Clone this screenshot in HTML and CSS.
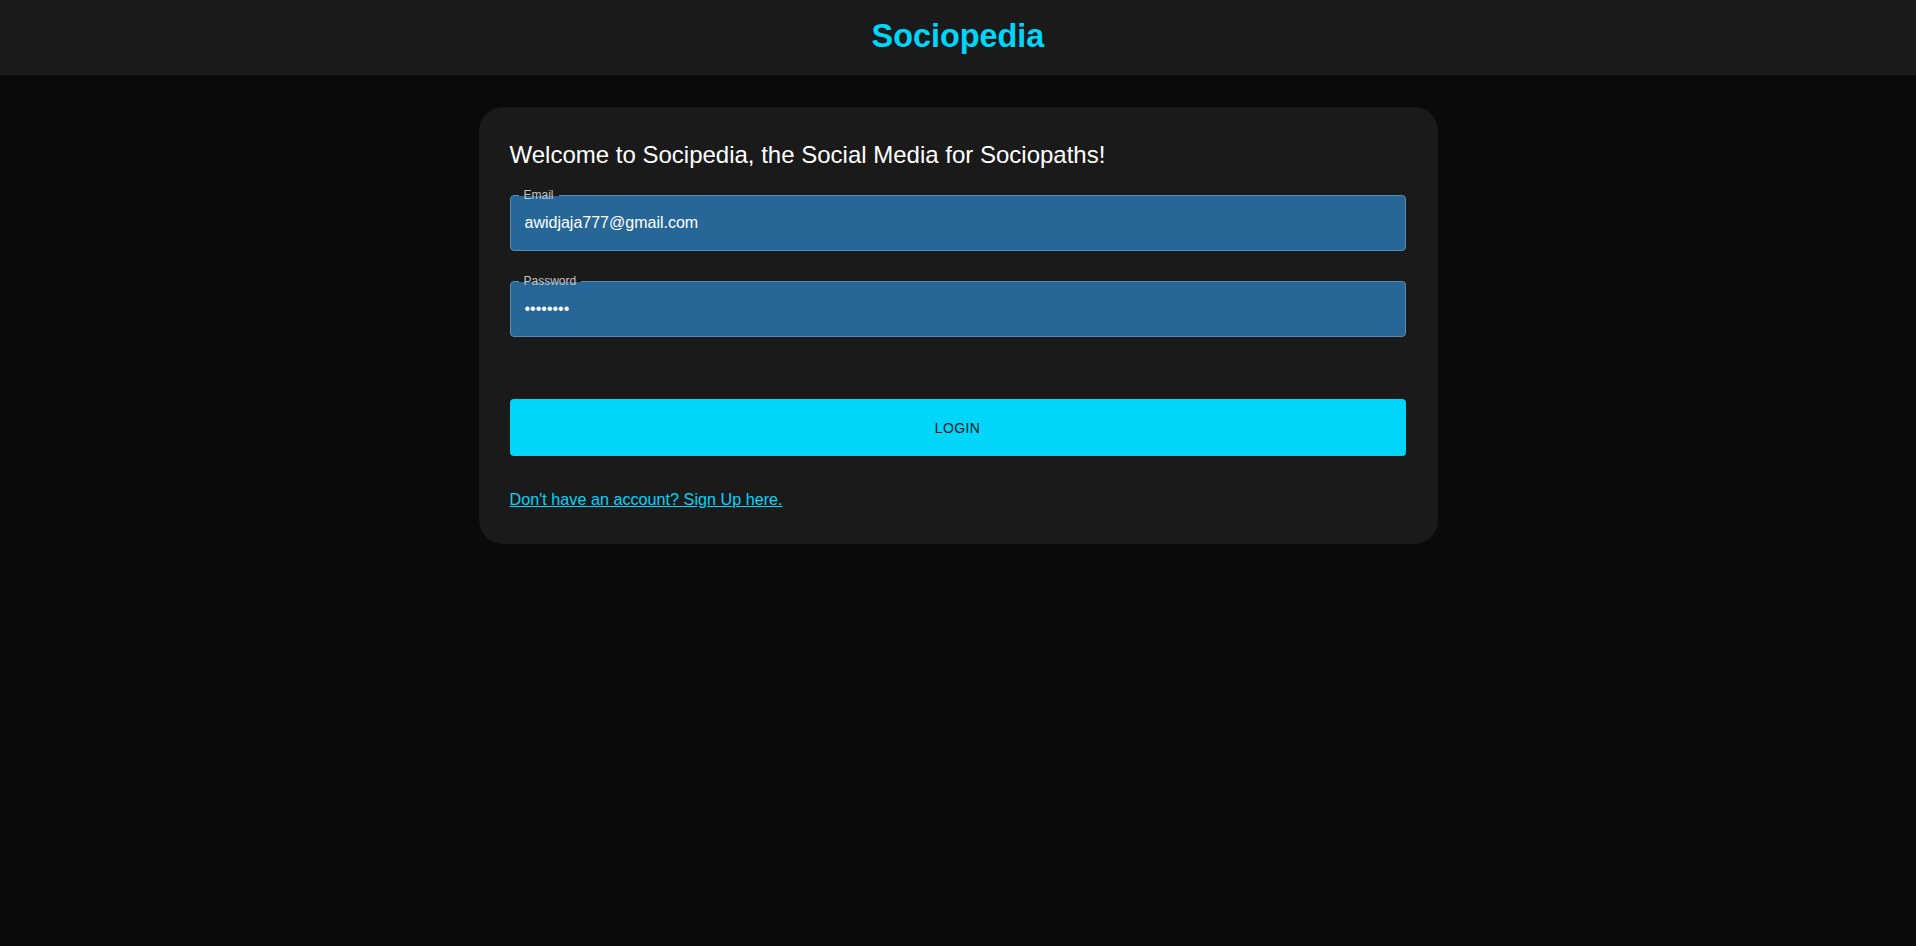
FILE: index.html
```html
<!DOCTYPE html>
<html lang="en">
<head>
<meta charset="utf-8">
<title>Sociopedia</title>
<link rel="stylesheet" href="styles.css">
</head>
<body>
<header class="navbar">
  <h1 class="brand">Sociopedia</h1>
</header>
<main class="card">
  <h2 class="welcome">Welcome to Socipedia, the Social Media for Sociopaths!</h2>
  <form class="form">
    <div class="field">
      <label class="field-label" for="email">Email</label>
      <input class="field-input" id="email" type="text" value="awidjaja777@gmail.com">
    </div>
    <div class="field">
      <label class="field-label" for="password">Password</label>
      <input class="field-input" id="password" type="password" value="abcdefgh">
    </div>
    <button class="login-btn" type="button">LOGIN</button>
    <a class="switch-link" href="#">Don't have an account? Sign Up here.</a>
  </form>
</main>
</body>
</html>
```
FILE: styles.css
```css
* {
  box-sizing: border-box;
}

html, body {
  margin: 0;
  padding: 0;
}

body {
  background: #0a0a0a;
  font-family: "Liberation Sans", Arial, sans-serif;
  color: #ffffff;
  min-height: 946px;
}

.navbar {
  height: 75px;
  background: #1a1a1a;
  padding: 19px 6% 0;
  text-align: center;
}

.brand {
  margin: 0;
  font-size: 32.4px;
  line-height: 35px;
  font-weight: 700;
  color: #00d5fa;
}

.card {
  width: 959px;
  margin: 32px auto;
  padding: 32px 32px 33px 31px;
  background: #1a1a1a;
  border-radius: 24px;
}

.welcome {
  margin: 0 0 24px;
  font-size: 24px;
  line-height: 32px;
  font-weight: 400;
  color: #ffffff;
}

.form {
  display: flex;
  flex-direction: column;
}

.field {
  position: relative;
  height: 56px;
}

.field + .field {
  margin-top: 30px;
}

.field-input {
  display: block;
  width: 100%;
  height: 56px;
  margin: 0;
  padding: 16.5px 14px;
  background: #276798;
  border: 1px solid #5a8ab2;
  border-radius: 4px;
  color: #ffffff;
  font-family: "Liberation Sans", Arial, sans-serif;
  font-size: 16px;
  line-height: 23px;
  outline: none;
}

.field-label {
  position: absolute;
  left: 9px;
  top: -7px;
  padding: 0 5px;
  background: linear-gradient(to bottom, #1a1a1a 0, #1a1a1a 8px, transparent 8px);
  color: #c4c4c4;
  font-size: 12px;
  line-height: 14px;
}

.login-btn {
  display: block;
  width: 100%;
  margin: 62px 0 31px;
  padding: 16px;
  height: 57px;
  border: none;
  border-radius: 4px;
  background: #00d5fa;
  color: #1a1a1a;
  font-family: "Liberation Sans", Arial, sans-serif;
  font-size: 14px;
  line-height: 22px;
  letter-spacing: 0.4px;
  font-weight: 400;
  cursor: pointer;
}

.switch-link {
  align-self: flex-start;
  color: #00d5fa;
  font-size: 16.2px;
  line-height: 24px;
  text-decoration: underline;
}
```
